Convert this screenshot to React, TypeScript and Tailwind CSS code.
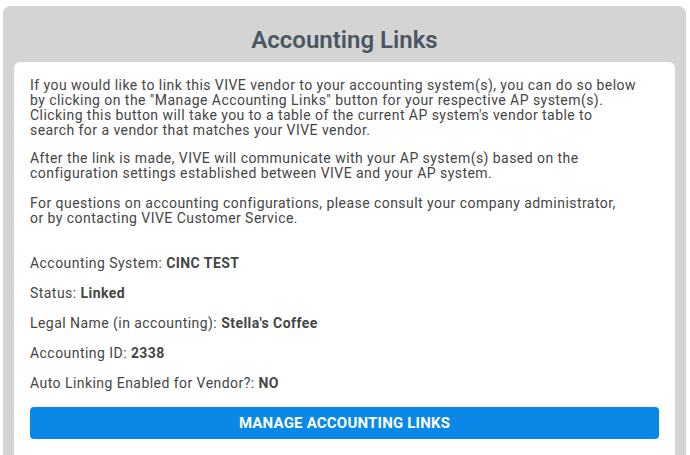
export default function App() {
  const rows = [
    { label: 'Accounting System', value: 'CINC TEST' },
    { label: 'Status', value: 'Linked' },
    { label: 'Legal Name (in accounting)', value: "Stella's Coffee" },
    { label: 'Accounting ID', value: '2338' },
    { label: 'Auto Linking Enabled for Vendor?', value: 'NO' },
  ];

  return (
    <div className="h-[455px] w-[690px] overflow-hidden bg-white pl-[3px] pr-[4px] pt-[6px] font-['Roboto',sans-serif]">
      <div className="flex h-[460px] flex-col rounded-t-[8px] bg-[#d4d4d4] px-[11px]">
        <h1 className="flex h-[56px] items-center justify-center pt-[11px] text-[24px] font-semibold text-[#4a5663]">
          Accounting Links
        </h1>
        <div className="flex-1 rounded-[6px] bg-white px-[16px] pt-[16px] text-[14px] leading-[15px] tracking-[0.45px] text-[#454545]">
          <p className="mb-[13px]">
            If you would like to link this VIVE vendor to your accounting system(s), you can do so below
            <br />
            by clicking on the "Manage Accounting Links" button for your respective AP system(s).
            <br />
            Clicking this button will take you to a table of the current AP system's vendor table to
            <br />
            search for a vendor that matches your VIVE vendor.
          </p>
          <p className="mb-[15px]">
            After the link is made, VIVE will communicate with your AP system(s) based on the
            <br />
            configuration settings established between VIVE and your AP system.
          </p>
          <p>
            For questions on accounting configurations, please consult your company administrator,
            <br />
            or by contacting VIVE Customer Service.
          </p>
          <div className="mt-[30px] flex flex-col gap-[15px]">
            {rows.map((r) => (
              <div key={r.label}>
                {r.label}: <span className="font-bold">{r.value}</span>
              </div>
            ))}
          </div>
          <button className="mt-[16px] flex h-[32px] w-full items-center justify-center rounded-[4px] bg-[#0a88e8] text-[15px] font-bold tracking-[0.2px] text-white">
            MANAGE ACCOUNTING LINKS
          </button>
        </div>
      </div>
    </div>
  );
}
